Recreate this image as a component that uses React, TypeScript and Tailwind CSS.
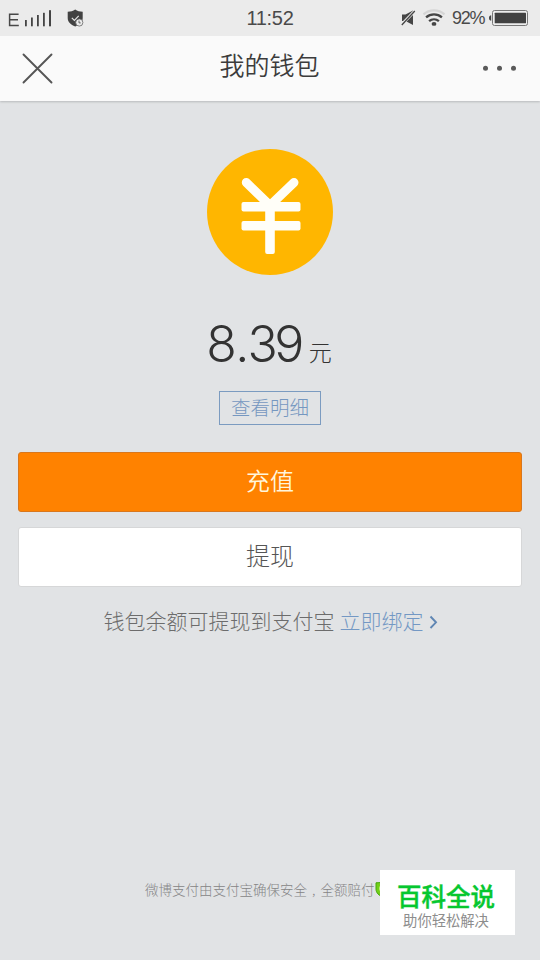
import React from 'react';

function StatusBar() {
  return (
    <div className="relative flex h-9 items-start justify-between bg-[#ebebeb] font-['Liberation_Sans',sans-serif] text-[#4a4a4a]">
      <div className="flex">
        <svg className="block" width="100" height="36" viewBox="0 0 100 36">
          <g fill="none" stroke="#484848" strokeWidth="1.5">
            <path d="M18.6 14.3H9.6v11.2h9.2M9.6 19.8h8.4" />
          </g>
          <g fill="#444">
            <rect x="25" y="20" width="1.8" height="6.3" />
            <rect x="31" y="17.5" width="1.8" height="8.8" />
            <rect x="37" y="15" width="1.8" height="11.3" />
            <rect x="43" y="12.8" width="1.8" height="13.5" />
            <rect x="49" y="10.2" width="2" height="16.1" />
          </g>
          <path
            d="M75.2 9.6c2.1 1.600 4.600 2.100 7.500 2.100v6.400c0 4-3 6.800-7.500 8.500-4.500-1.700-7.500-4.500-7.500-8.500v-6.400c2.900 0 5.400-.5 7.500-2.100z"
            fill="#424242"
          />
          <path d="M71.800 17.800l2.600 2.600 4.300-4.500" fill="none" stroke="#e4e4e4" strokeWidth="1.2" />
          <circle cx="79.300" cy="22.500" r="3.600" fill="#ebebeb" stroke="#666" strokeWidth="0.8" />
          <path d="M79 20.600v2.300h1.700" fill="none" stroke="#555" strokeWidth="0.9" />
        </svg>
      </div>
      <div className="absolute inset-x-0 top-[6px] text-center text-[20px] leading-6 tracking-[-0.3px]">11:52</div>
      <div className="flex">
        <svg className="block" width="48" height="36" viewBox="398 0 48 36">
          <path d="M402 14.500h3.500l7.500-4.100V25l-7.500-4.100H402z" fill="#454545" />
          <path d="M401 25.300L414.800 11" stroke="#ebebeb" strokeWidth="3" />
          <path d="M401.800 25L414.800 11" stroke="#454545" strokeWidth="1.300" />
          <g fill="none" strokeWidth="2.300">
            <path d="M423.500 14.300a15.800 15.800 0 0 1 21 0" stroke="#d5d5d5" />
            <path d="M426.100 17.300a12 12 0 0 1 15.800 0" stroke="#454545" />
            <path d="M429.100 21.100a7.500 7.500 0 0 1 9.800 0" stroke="#454545" />
          </g>
          <ellipse cx="434" cy="23.900" rx="2.400" ry="1.900" fill="#454545" />
        </svg>
        <div className="ml-[6px] mt-[6px] w-[36px] whitespace-nowrap text-[18px] leading-6 tracking-[-1.300px]">92%</div>
        <svg className="block" width="52" height="36" viewBox="488 0 52 36">
          <path d="M491.200 15.300v5.400c-1.300 0-2.200-1-2.200-2.700s.9-2.700 2.200-2.700z" fill="#444" />
          <rect x="492.500" y="10.500" width="35" height="15" rx="2" fill="#eeeeee" stroke="#777" />
          <rect x="494.700" y="12.800" width="31.300" height="10.400" rx="0.500" fill="#424242" />
        </svg>
      </div>
    </div>
  );
}

function Header() {
  return (
    <header className="flex h-[65px] items-start justify-between bg-[#fafafa] pl-[22px] pr-[22px] shadow-[0_1px_2px_#b8babc]">
      <svg className="mt-[17px] block" width="32" height="32" viewBox="0 0 32 32">
        <path d="M1.500 1.500L29.500 29.500M29.500 1.500L1.500 29.500" stroke="#555" strokeWidth="1.900" strokeLinecap="round" />
      </svg>
      <h1 className="mt-[10px] pl-[3px] text-[25px] font-[350] leading-[36px] text-[#3c3c3c]">我的钱包</h1>
      <svg className="mt-[26px] block" width="36" height="12" viewBox="0 0 36 12">
        <g fill="#5a5a5a">
          <circle cx="3.500" cy="6.300" r="2.500" />
          <circle cx="17.500" cy="6.300" r="2.500" />
          <circle cx="31.500" cy="6.300" r="2.500" />
        </g>
      </svg>
    </header>
  );
}

function YuanCoin() {
  return (
    <svg className="block" width="126" height="126" viewBox="0 0 126 126">
      <circle cx="63" cy="63" r="63" fill="#ffb600" />
      <g fill="none" stroke="#fffef8" strokeWidth="9" strokeLinecap="round">
        <path d="M39.300 33.500L63 56.500 87 33.500" strokeLinejoin="round" />
      </g>
      <g fill="#fffef8">
        <rect x="34.500" y="53" width="59" height="9.500" rx="2" />
        <rect x="34.500" y="72" width="59" height="9.500" rx="2" />
        <rect x="58.200" y="52" width="9.600" height="53" rx="2" />
      </g>
    </svg>
  );
}

export default function App() {
  return (
    <div className="flex h-[960px] w-[540px] flex-col overflow-hidden bg-[#e1e3e5] font-['Noto_Sans_CJK_SC',sans-serif]">
      <StatusBar />
      <Header />
      <main className="relative flex flex-1 flex-col items-center px-[18px] pt-12">
        <YuanCoin />
        <div className="mt-[39px] flex h-[60px] items-start pr-[2px] text-[#333]">
          <span className="font-['Inter',sans-serif] text-[50px] font-light leading-[60px] tracking-[-3.500px]">
            8<span className="ml-[2px] tracking-[-2px]">.</span>39
          </span>
          <span className="ml-[8px] mt-[22px] text-[23px] font-light leading-[30px]">元</span>
        </div>
        <button className="mt-[17px] h-[34px] w-[102px] border border-[#7b9bc0] pb-[2px] text-[19.500px] font-light leading-[28px] text-[#7597c0]">
          查看明细
        </button>
        <button className="mt-[27px] h-[60px] w-full rounded-[3px] border border-[#d9771c] bg-[#ff8200] pb-[4px] text-[24px] font-[350] leading-[52px] text-[#fff6dc]">
          充值
        </button>
        <button className="mt-[15px] h-[60px] w-full rounded-[3px] border border-[#d6d7d8] bg-white pb-[4px] text-[24px] font-light leading-[52px] text-[#555]">
          提现
        </button>
        <div className="mt-[18px] flex h-[32px] items-center whitespace-nowrap pl-[2px] text-[21px] font-light text-[#6c6c6c]">
          <span>钱包余额可提现到支付宝</span>
          <span className="ml-[5px] text-[#7398c4]">立即绑定</span>
          <svg className="ml-[5px] mt-[2px] block" width="10" height="14" viewBox="0 0 10 14">
            <path d="M1.500 1.500L7 7.300 1.500 13" fill="none" stroke="#5f86b3" strokeWidth="1.900" />
          </svg>
        </div>
        <div className="mb-[61px] mt-auto flex h-5 w-full items-center whitespace-nowrap pl-[127px] text-[13.500px] font-light text-[#858585]">
          <span>微博支付由支付宝确保安全</span>
          <span className="w-[13.500px] pl-[5px]">,</span>
          <span>全额赔付</span>
          <svg className="block" width="16" height="18" viewBox="0 0 16 18">
            <path d="M8 1c2 1.500 4 1.800 7 1.800V9c0 4-3 6.500-7 8-4-1.500-7-4-7-8V2.800C4 2.800 6 2.500 8 1z" fill="#72cf18" stroke="#45a60c" />
            <circle cx="8" cy="8.500" r="3" fill="none" stroke="#d7f59c" strokeWidth="1.500" />
          </svg>
        </div>
        <div className="absolute left-[380px] top-[769px] flex h-[65px] w-[135px] flex-col items-center bg-white">
          <div className="mt-[12px] pr-[3px] text-[24.500px] font-medium leading-[28px] text-[#06c72f] [-webkit-text-stroke:0.400px_#06c72f]">百科全说</div>
          <div className="mt-px pr-[3px] text-[14.300px] leading-[17px] text-[#8d8d8d]">助你轻松解决</div>
        </div>
      </main>
    </div>
  );
}
